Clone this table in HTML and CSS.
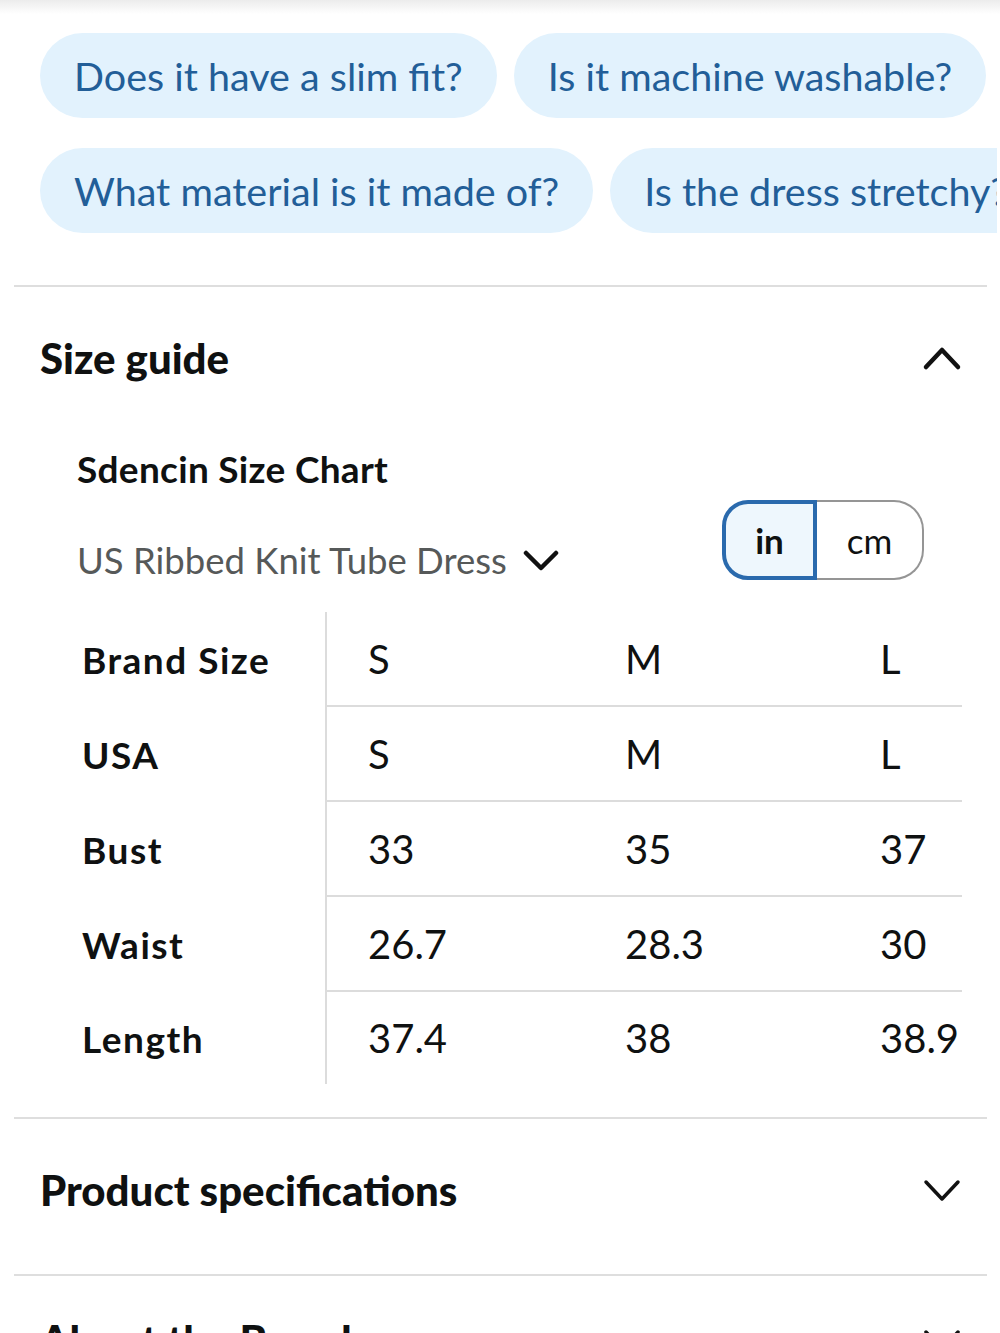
FILE: index.html
```html
<!DOCTYPE html>
<html lang="en">
<head>
<meta charset="utf-8">
<title>Size guide</title>
<link rel="stylesheet" href="styles.css">
</head>
<body>
<div class="topshade"></div>
<div class="chips">
  <div class="chip-row">
    <span class="chip">Does it have a slim fit?</span>
    <span class="chip">Is it machine washable?</span>
  </div>
  <div class="chip-row">
    <span class="chip">What material is it made of?</span>
    <span class="chip">Is the dress stretchy?</span>
  </div>
</div>
<div class="divider divider-top"></div>
<section class="section">
  <div class="section-head">
    <h2 class="section-title">Size guide</h2>
    <svg class="chev chev-up" width="40" height="30" viewBox="0 0 40 30"><polyline points="4,24 20,7 36,24" fill="none" stroke="#111" stroke-width="4.5" stroke-linecap="round" stroke-linejoin="round"/></svg>
  </div>
  <div class="chart">
    <div class="chart-title">Sdencin Size Chart</div>
    <div class="chart-controls">
      <div class="dropdown">US Ribbed Knit Tube Dress
        <svg class="dd-chev" width="36" height="26" viewBox="0 0 36 26"><polyline points="3,5 18,20 33,5" fill="none" stroke="#111" stroke-width="4.5" stroke-linecap="round" stroke-linejoin="round"/></svg>
      </div>
      <div class="unit-toggle">
        <span class="unit unit-active">in</span>
        <span class="unit unit-off">cm</span>
      </div>
    </div>
    <div class="size-table">
      <div class="lbl">Brand Size</div><div class="val c1 b">S</div><div class="val b">M</div><div class="val b">L</div>
      <div class="lbl">USA</div><div class="val c1 b">S</div><div class="val b">M</div><div class="val b">L</div>
      <div class="lbl">Bust</div><div class="val c1 b">33</div><div class="val b">35</div><div class="val b">37</div>
      <div class="lbl">Waist</div><div class="val c1 b">26.7</div><div class="val b">28.3</div><div class="val b">30</div>
      <div class="lbl">Length</div><div class="val c1">37.4</div><div class="val">38</div><div class="val">38.9</div>
    </div>
  </div>
</section>
<div class="divider divider-mid"></div>
<section class="section">
  <div class="section-head section-head-closed">
    <h2 class="section-title">Product specifications</h2>
    <svg class="chev" width="40" height="30" viewBox="0 0 40 30"><polyline points="4,7 20,24 36,7" fill="none" stroke="#111" stroke-width="3.5" stroke-linecap="round" stroke-linejoin="round"/></svg>
  </div>
</section>
<div class="divider"></div>
<section class="section">
  <div class="section-head section-head-cut">
    <h2 class="section-title">About the Brand</h2>
    <svg class="chev" width="40" height="30" viewBox="0 0 40 30"><polyline points="4,7 20,24 36,7" fill="none" stroke="#111" stroke-width="3.5" stroke-linecap="round" stroke-linejoin="round"/></svg>
  </div>
</section>
</body>
</html>
```
FILE: styles.css
```css
html, body {
  margin: 0;
  padding: 0;
  background: #fff;
}
body {
  width: 1000px;
  height: 1333px;
  overflow: hidden;
  font-family: "Lato", "Liberation Sans", sans-serif;
  color: #0f1111;
}
.topshade {
  height: 14px;
  background: linear-gradient(#ececec, #fff);
}
.chips {
  margin-top: 19px;
  padding-left: 40px;
  width: 957px;
  overflow: hidden;
  display: flex;
  flex-direction: column;
  gap: 30px;
}
.chip-row {
  display: flex;
  gap: 17px;
  white-space: nowrap;
}
.chip {
  flex: none;
  height: 85px;
  box-sizing: border-box;
  padding: 0 34px;
  border-radius: 43px;
  background: #e2f2fd;
  color: #225e98;
  font-size: 39.5px;
  display: flex;
  align-items: center;
}
.divider {
  margin: 0 13px 0 14px;
  height: 2px;
  background: #dedede;
}
.divider-top {
  margin-top: 52px;
}
.divider-mid {
  margin-top: 33px;
}
.section-head {
  display: flex;
  align-items: center;
  justify-content: space-between;
  padding: 47px 38px 0 40px;
}
.section-head-closed {
  padding-bottom: 60px;
}
.section-head-cut {
  padding-top: 40px;
}
.section-title {
  margin: 0;
  font-family: "Lato", "Liberation Sans", sans-serif;
  font-weight: 900;
  font-size: 42px;
  line-height: 48px;
  letter-spacing: 0;
  color: #0f1111;
}
.chev { display: block; }
.chart {
  padding: 0 38px 0 77px;
}
.chart-title {
  margin-top: 67px;
  font-weight: 700;
  font-size: 37px;
  line-height: 40px;
  letter-spacing: 0.3px;
}
.chart-controls {
  margin-top: 11px;
  display: flex;
  justify-content: space-between;
  align-items: flex-end;
  padding-right: 38px;
}
.dropdown {
  display: flex;
  align-items: center;
  gap: 16px;
  font-size: 36.5px;
  line-height: 40px;
  color: #565959;
}
.dd-chev { display: block; margin-top: 2px; }
.unit-toggle {
  display: flex;
  height: 80px;
}
.unit {
  box-sizing: border-box;
  display: flex;
  align-items: center;
  justify-content: center;
  font-size: 35px;
  height: 80px;
}
.unit-active {
  width: 95px;
  border: 4px solid #2a6aad;
  border-radius: 26px 0 0 26px;
  background: #eef7fd;
  font-weight: 700;
  color: #0f1111;
}
.unit-off {
  width: 107px;
  border: 2px solid #959595;
  border-left: none;
  border-radius: 0 30px 30px 0;
  background: #fff;
  color: #0f1111;
}
.size-table {
  margin: 32px 0 0 5px;
  display: grid;
  grid-template-columns: 243px 257px 255px 125px;
  grid-template-rows: 95px 95px 95px 95px 92px;
}
.lbl {
  display: flex;
  align-items: center;
  font-weight: 700;
  font-size: 37px;
  letter-spacing: 1.5px;
  color: #0f1111;
}
.val {
  box-sizing: border-box;
  display: flex;
  align-items: center;
  padding-left: 43px;
  font-size: 40px;
  color: #0f1111;
  white-space: nowrap;
}
.c1 {
  border-left: 2px solid #dcdcdc;
  padding-left: 41px;
}
.b {
  border-bottom: 2px solid #dcdcdc;
}
```
